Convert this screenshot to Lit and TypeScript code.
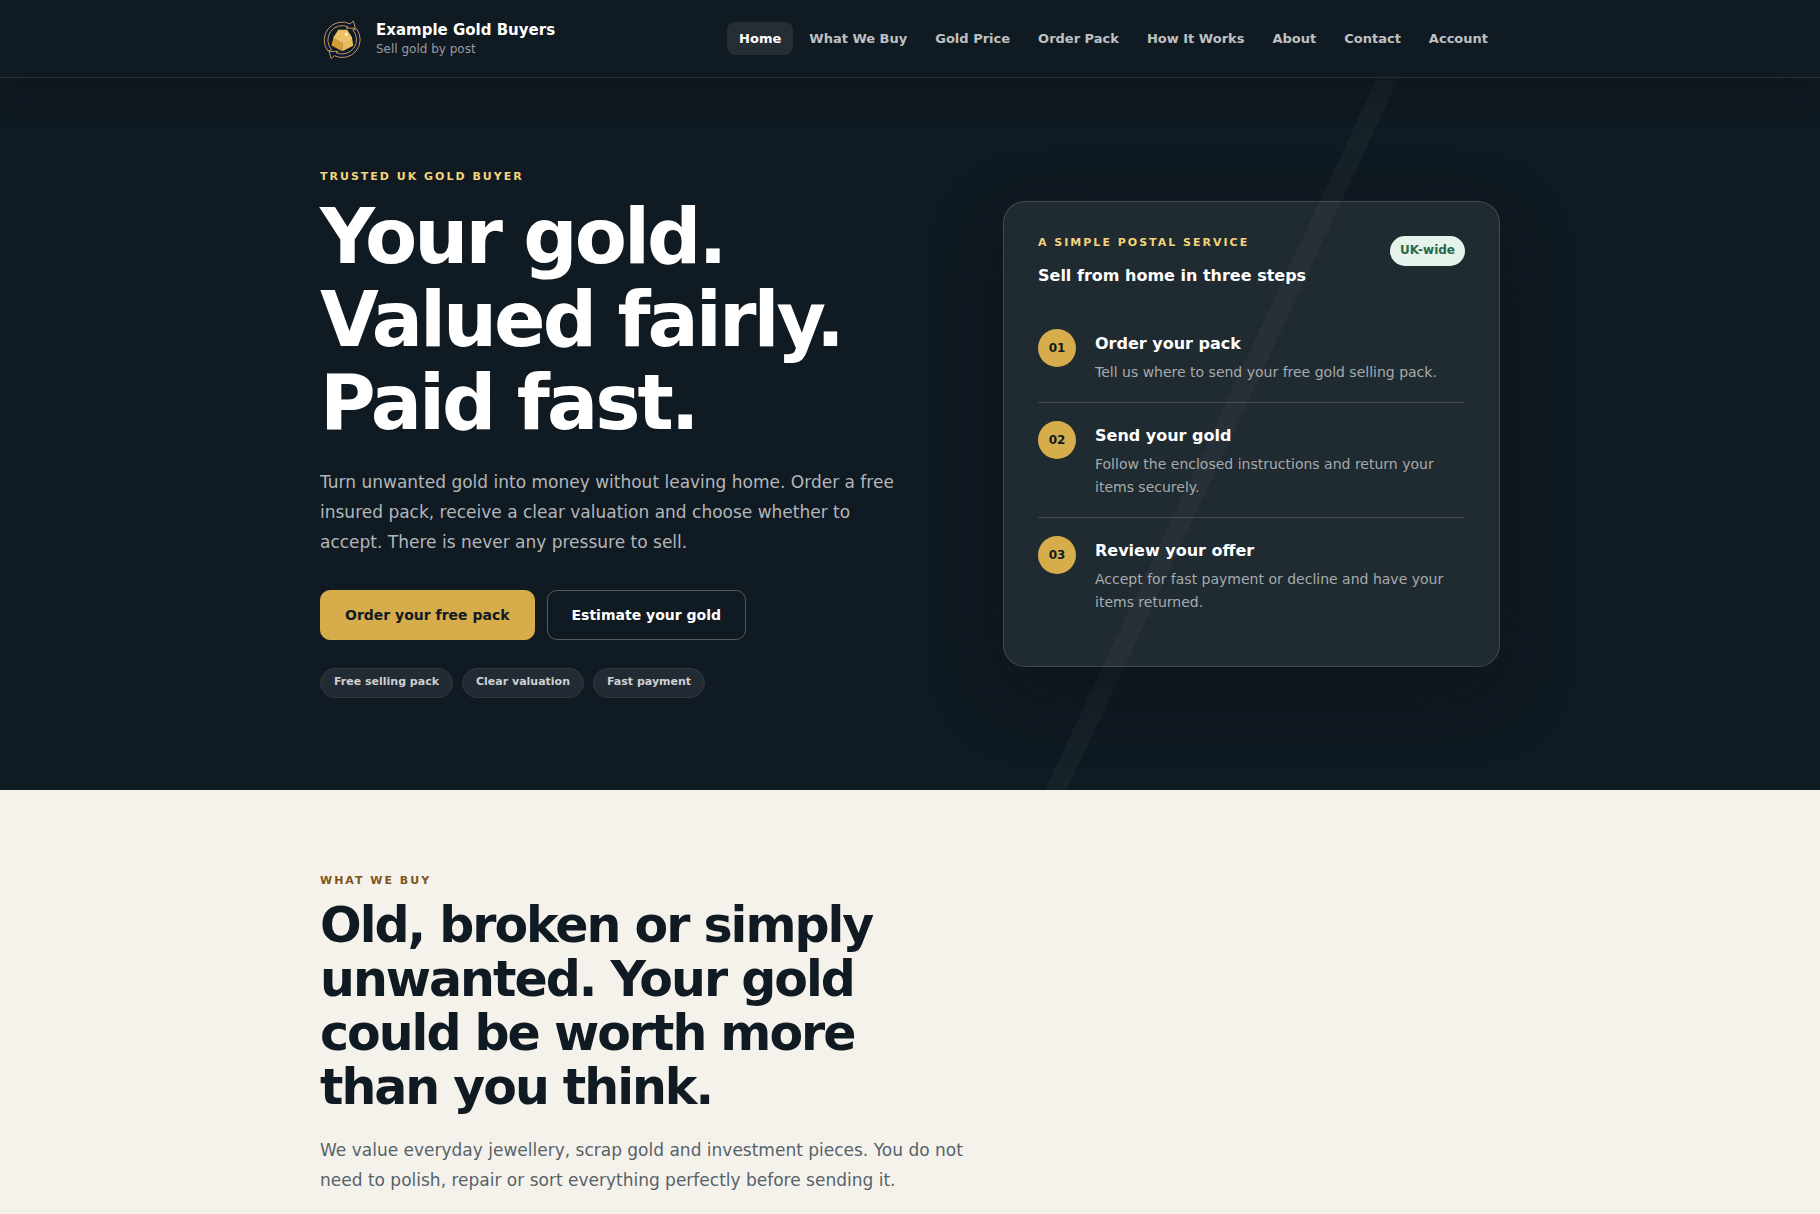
import { LitElement, css, html } from "lit";
import { customElement } from "lit/decorators.js";
import { classMap } from "lit/directives/class-map.js";

interface Step {
  number: string;
  title: string;
  text: string;
}

const NAV_ITEMS: string[] = [
  "Home",
  "What We Buy",
  "Gold Price",
  "Order Pack",
  "How It Works",
  "About",
  "Contact",
  "Account",
];

const BENEFITS: string[] = ["Free selling pack", "Clear valuation", "Fast payment"];

const STEPS: Step[] = [
  {
    number: "01",
    title: "Order your pack",
    text: "Tell us where to send your free gold selling pack.",
  },
  {
    number: "02",
    title: "Send your gold",
    text: "Follow the enclosed instructions and return your items securely.",
  },
  {
    number: "03",
    title: "Review your offer",
    text: "Accept for fast payment or decline and have your items returned.",
  },
];

const slug = (label: string) => "#" + label.toLowerCase().replace(/ /g, "-");

@customElement("brand-mark")
export class BrandMark extends LitElement {
  static styles = css`
    :host {
      display: block;
      width: 44px;
      height: 44px;
    }
    .mark {
      display: block;
      width: 100%;
      height: 100%;
    }
  `;

  render() {
    return html`
      <svg class="mark" viewBox="0 0 44 44" fill="none" aria-hidden="true">
        <g fill="#10163a" stroke="#cfa854" stroke-width="0.9" stroke-linejoin="round">
          <path
            d="M7.8 33.8 A18 18 0 0 1 30.2 6.9 L33.3 4 L35.3 11.2 H26.3 L28.2 9.9 A14.4 14.4 0 0 0 11.6 32.7 Z"
          />
          <path
            d="M7.8 33.8 A18 18 0 0 1 30.2 6.9 L33.3 4 L35.3 11.2 H26.3 L28.2 9.9 A14.4 14.4 0 0 0 11.6 32.7 Z"
            transform="rotate(180 22.2 22.8)"
          />
        </g>
        <path d="M18.4 12.8 H27.2 L32 20.2 L22.3 25 L13.6 20 Z" fill="#ecc165" />
        <path d="M13.6 20 L22.3 25 V34.2 L11.4 28.4 Z" fill="#d19c33" />
        <path d="M22.3 25 L32 20.2 L33.2 28.8 L22.3 34.2 Z" fill="#e9bd5e" />
        <path d="M13.6 20 L22.3 25 L32 20.2" stroke="#f8dc98" stroke-width="0.8" />
        <path
          d="M26.2 14.6 L26.9 16.5 L28.8 17.2 L26.9 17.9 L26.2 19.8 L25.5 17.9 L23.6 17.2 L25.5 16.5 Z"
          fill="#fff2cf"
        />
      </svg>
    `;
  }
}

@customElement("site-header")
export class SiteHeader extends LitElement {
  static styles = css`
    :host {
      display: block;
      position: relative;
      z-index: 1;
      background: #101a22;
      border-bottom: 1px solid #262f36;
      box-shadow: 0 12px 36px rgba(14, 16, 24, 0.45);
    }
    .bar {
      box-sizing: border-box;
      max-width: 1180px;
      min-height: 77px;
      margin: 0 auto;
      display: flex;
      align-items: center;
      justify-content: space-between;
      gap: 24px;
    }
    .brand {
      display: flex;
      align-items: center;
      gap: 12px;
      color: #fff;
      text-decoration: none;
    }
    .brand-text {
      display: flex;
      flex-direction: column;
    }
    .name {
      font-size: 15px;
      font-weight: 700;
      line-height: 20px;
    }
    .tag {
      font-size: 12px;
      line-height: 18px;
      color: #989ca0;
    }
    .links {
      display: flex;
      flex-wrap: wrap;
      gap: 4px;
    }
    .link {
      padding: 6px 12px;
      border-radius: 8px;
      font-size: 13px;
      font-weight: 700;
      line-height: 21px;
      color: #bfc0c2;
      text-decoration: none;
    }
    .active {
      background: #252e34;
      color: #fff;
    }
  `;

  render() {
    return html`
      <div class="bar">
        <a class="brand" href="#home">
          <brand-mark></brand-mark>
          <span class="brand-text">
            <span class="name">Example Gold Buyers</span>
            <span class="tag">Sell gold by post</span>
          </span>
        </a>
        <nav class="links" aria-label="Main">
          ${NAV_ITEMS.map(
            (label, i) => html`<a class=${classMap({ link: true, active: i === 0 })} href=${slug(label)}>${label}</a>`
          )}
        </nav>
      </div>
    `;
  }
}

@customElement("steps-card")
export class StepsCard extends LitElement {
  static styles = css`
    :host {
      display: block;
      padding: 34px;
      border: 1px solid rgba(255, 255, 255, 0.15);
      border-radius: 22px;
      background: rgba(255, 255, 255, 0.07);
      box-shadow: 0 24px 70px rgba(12, 14, 22, 0.45);
    }
    .head {
      display: flex;
      align-items: flex-start;
      justify-content: space-between;
      gap: 16px;
      padding-bottom: 21px;
    }
    .eyebrow {
      margin: 0;
      font-size: 11px;
      font-weight: 700;
      line-height: 14px;
      letter-spacing: 2px;
      text-transform: uppercase;
      color: #f3d47b;
    }
    .title {
      margin: 12px 0 0;
      font-size: 16px;
      font-weight: 700;
      line-height: 28px;
      color: #fff;
    }
    .badge {
      padding: 4px 10px 6px;
      border-radius: 15px;
      background: #e6f3ea;
      color: #24694d;
      font-size: 12px;
      font-weight: 700;
      line-height: 20px;
    }
    .steps {
      margin: 0;
      padding: 0;
      list-style: none;
    }
    .step {
      display: grid;
      grid-template-columns: 38px 1fr;
      align-items: start;
      gap: 19px;
      padding: 18px 0;
    }
    .step + .step {
      border-top: 1px solid rgba(255, 255, 255, 0.15);
    }
    .number {
      height: 38px;
      border-radius: 50%;
      background: #d7ad4b;
      color: #101a22;
      font-size: 12px;
      font-weight: 700;
      line-height: 38px;
      text-align: center;
    }
    .step-title {
      margin: 0;
      font-size: 16px;
      font-weight: 700;
      line-height: 30px;
      color: #fff;
    }
    .step-text {
      margin: 2px 0 0;
      font-size: 14px;
      line-height: 23px;
      color: #a6aaad;
    }
  `;

  render() {
    return html`
      <div class="head">
        <div>
          <p class="eyebrow">A simple postal service</p>
          <h2 class="title">Sell from home in three steps</h2>
        </div>
        <span class="badge">UK-wide</span>
      </div>
      <ol class="steps">
        ${STEPS.map(
          (step) => html`
            <li class="step">
              <span class="number">${step.number}</span>
              <div>
                <h3 class="step-title">${step.title}</h3>
                <p class="step-text">${step.text}</p>
              </div>
            </li>
          `
        )}
      </ol>
    `;
  }
}

@customElement("app-root")
export class AppRoot extends LitElement {
  static styles = css`
    :host {
      display: block;
      min-height: 100vh;
      background: #f5f2eb;
      color: #101a22;
      font-family: "DejaVu Sans", sans-serif;
    }
    .hero {
      padding: 92px 0;
      background: linear-gradient(
          115deg,
          transparent 0 64%,
          rgba(255, 255, 255, 0.03) 64% 65%,
          transparent 65%
        )
        #101a22;
    }
    .hero-inner {
      max-width: 1180px;
      margin: 0 auto;
      display: grid;
      grid-template-columns: minmax(0, 1fr) 497px;
      align-items: center;
      gap: 72px;
    }
    .eyebrow {
      margin: 0;
      font-size: 11px;
      font-weight: 700;
      line-height: 14px;
      letter-spacing: 2px;
      text-transform: uppercase;
      color: #f3d47b;
    }
    .headline {
      margin: 11px 0 0;
      font-size: 76px;
      font-weight: 700;
      line-height: 83px;
      letter-spacing: -3px;
      color: #fff;
    }
    .lead {
      margin: 23px 0 0;
      max-width: 590px;
      font-size: 17px;
      line-height: 30px;
      color: #b3b6b9;
    }
    .actions {
      margin-top: 33px;
      display: flex;
      flex-wrap: wrap;
      gap: 12px;
    }
    .button {
      padding: 12px 24px;
      border: 1px solid #d7ad4b;
      border-radius: 10px;
      background: #d7ad4b;
      color: #101a22;
      font-size: 14px;
      font-weight: 700;
      line-height: 24px;
      text-decoration: none;
    }
    .outline {
      border-color: #545b61;
      background: transparent;
      color: #fff;
    }
    .benefits {
      margin: 28px 0 0;
      padding: 0;
      display: flex;
      flex-wrap: wrap;
      gap: 9px;
      list-style: none;
    }
    .benefit {
      padding: 3px 13px 5px;
      border: 1px solid #303840;
      border-radius: 15px;
      background: #222a33;
      color: #ced0d2;
      font-size: 11px;
      font-weight: 700;
      line-height: 20px;
    }
    .intro {
      max-width: 1180px;
      margin: 0 auto;
      padding: 84px 0 0;
    }
    .brown {
      color: #7d5518;
    }
    .heading {
      margin: 11px 0 0;
      max-width: 660px;
      font-size: 49px;
      font-weight: 700;
      line-height: 54px;
      letter-spacing: -2px;
    }
    .summary {
      margin: 20px 0 0;
      max-width: 660px;
      font-size: 17px;
      line-height: 30px;
      color: #56626a;
    }
  `;

  render() {
    return html`
      <site-header></site-header>
      <main>
        <section class="hero">
          <div class="hero-inner">
            <div>
              <p class="eyebrow">Trusted UK gold buyer</p>
              <h1 class="headline">Your gold.<br />Valued fairly.<br />Paid fast.</h1>
              <p class="lead">
                Turn unwanted gold into money without leaving home. Order a free insured pack, receive a clear
                valuation and choose whether to accept. There is never any pressure to sell.
              </p>
              <div class="actions">
                <a class="button" href="#order-pack">Order your free pack</a>
                <a class="button outline" href="#gold-price">Estimate your gold</a>
              </div>
              <ul class="benefits">
                ${BENEFITS.map((label) => html`<li class="benefit">${label}</li>`)}
              </ul>
            </div>
            <steps-card></steps-card>
          </div>
        </section>
        <section class="intro">
          <p class="eyebrow brown">What we buy</p>
          <h2 class="heading">Old, broken or simply unwanted. Your gold could be worth more than you think.</h2>
          <p class="summary">
            We value everyday jewellery, scrap gold and investment pieces. You do not need to polish, repair or sort
            everything perfectly before sending it.
          </p>
        </section>
      </main>
    `;
  }
}
